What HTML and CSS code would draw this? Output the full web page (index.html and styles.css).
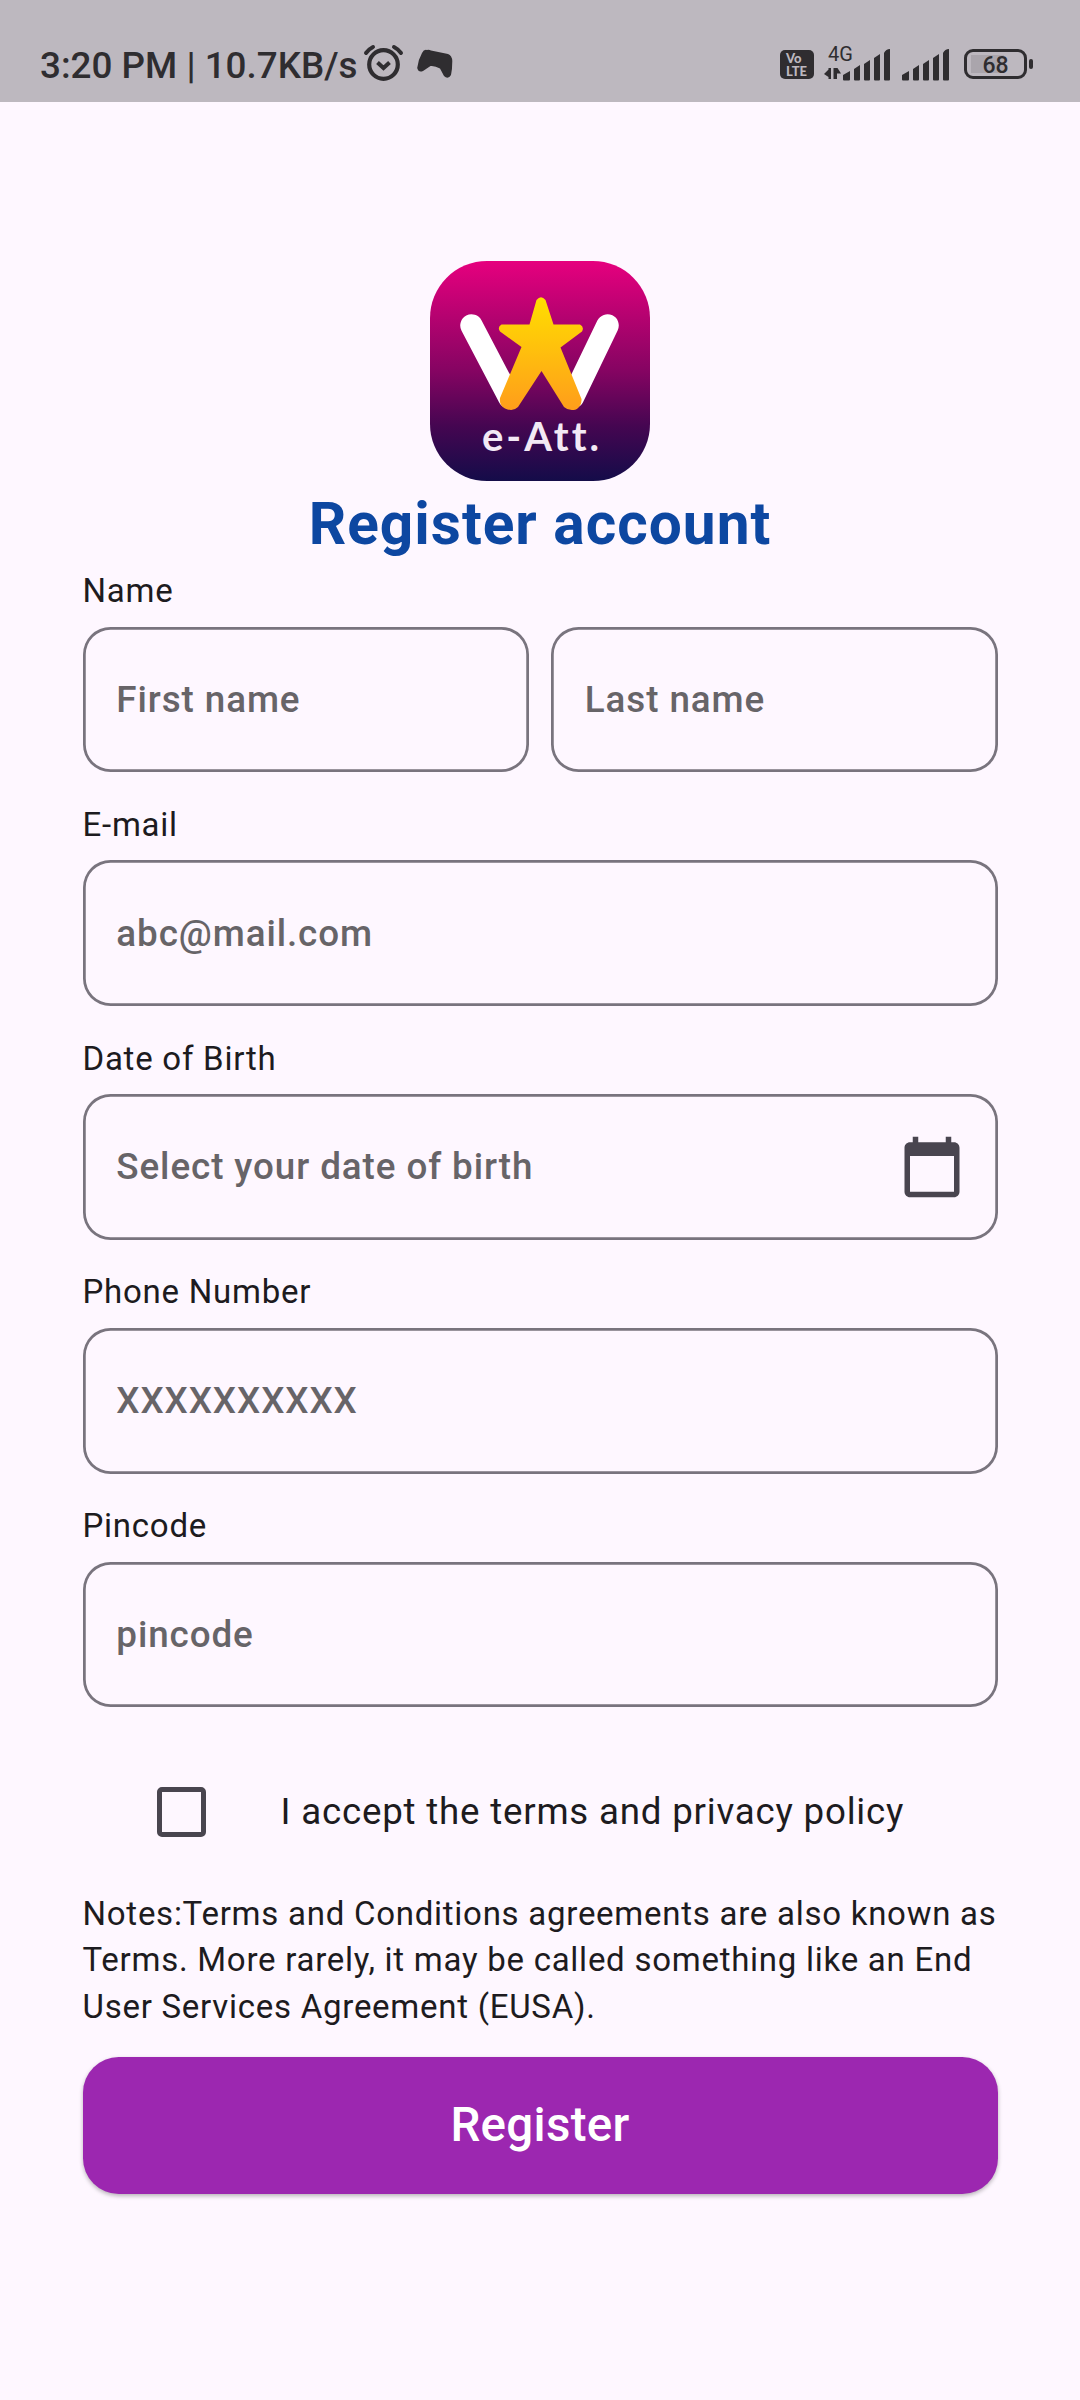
FILE: index.html
```html
<!DOCTYPE html>
<html lang="en">
<head>
<meta charset="utf-8">
<title>Register account</title>
<link rel="stylesheet" href="styles.css">
</head>
<body>
<header class="status">
  <span class="clock">3:20 PM | 10.7KB/s</span>
  <svg class="alarm" width="42" height="40" viewBox="0 0 42 40" fill="none" stroke="#2f2d30" stroke-linecap="round">
    <circle cx="20.5" cy="21.500" r="14.300" stroke-width="4.200"/>
    <path d="M14.500 19.500l6 5.500 6-5.500" stroke-width="4" stroke-linecap="butt"/>
    <path d="M3 10q3-4 7-6M38 10q-3-4-7-6" stroke-width="4"/>
  </svg>
  <svg class="gamepad" width="36" height="30" viewBox="0 0 36 30" fill="#2f2d30">
    <path d="M10 1Q12 .5 14 1.500L31 5Q35 6.500 35.300 12Q35.300 20 34 26Q31 31 27 27L23 19.500Q18 16.500 13.500 17L6 22Q1.500 24 .2 19Q1 11 5 4Q7 0 10 1Z"/>
  </svg>
  <span class="volte"><span>Vo</span><span>LTE</span></span>
  <span class="network">
    <span class="gen">4G</span>
    <svg width="68" height="32" viewBox="0 0 68 32" fill="#2f2d30">
      <path d="M0 25L4.500 20.500V19H7V30H4.500V28zM9.500 19h4l3.500 5.500h-4v5.500h-3.500z"/>
      <path d="M19 26l7-4v8.500q0 1-1 1h-5q-1 0-1-1zM30 20l6-4v14.500q0 1-1 1h-4q-1 0-1-1zM40 15l6-4v19.500q0 1-1 1h-4q-1 0-1-1zM50 9l6-4v25.500q0 1-1 1h-4q-1 0-1-1zM60 4q2-4 6-4v30.500q0 1-1 1h-4q-1 0-1-1z"/>
    </svg>
  </span>
  <svg class="bars" width="48" height="32" viewBox="0 0 48 32" fill="#2f2d30">
    <path d="M0 26l7-4v8.500q0 1-1 1h-5q-1 0-1-1zM11 20l6-4v14.500q0 1-1 1h-4q-1 0-1-1zM21 15l6-4v19.500q0 1-1 1h-4q-1 0-1-1zM31 9l6-4v25.500q0 1-1 1h-4q-1 0-1-1zM41 4q2-4 6-4v30.500q0 1-1 1h-4q-1 0-1-1z"/>
  </svg>
  <span class="battery"><span>68</span></span>
  <span class="cap"></span>
</header>

<main class="page">
  <svg class="logo" width="220" height="220" viewBox="0 0 220 220">
    <defs>
      <linearGradient id="bg" x1="0" y1="0" x2="0" y2="1">
        <stop offset="0" stop-color="#e6007e"/><stop offset=".5" stop-color="#850462"/><stop offset=".75" stop-color="#450651"/><stop offset="1" stop-color="#140c49"/>
      </linearGradient>
      <linearGradient id="gold" x1="0" y1="0" x2="0" y2="1">
        <stop offset="0" stop-color="#ffde00"/><stop offset="1" stop-color="#ff9d1b"/>
      </linearGradient>
    </defs>
    <rect width="220" height="220" rx="57" fill="url(#bg)"/>
    <path d="M41.500 64.500L79 136M177.500 64.500L143 136" stroke="#fff" stroke-width="22.500" stroke-linecap="round"/>
    <path d="M106.500 39Q111 33.500 115.500 39L123.500 63.500H150Q154.500 66 152 70.500L130.500 86.500L151.500 138Q152 145 146 148.500Q139 150.500 134 146L111.500 110L88 146Q83 151 75 147.500Q69 144 70 137L91.500 86L70 70.500Q67 66 71.500 63.500H99.500Z" fill="url(#gold)"/>
    <text class="logo-text" x="52" y="190" textLength="117" lengthAdjust="spacing">e-Att.</text>
  </svg>
  <h1 class="title">Register account</h1>

  <section class="group">
    <div class="label">Name</div>
    <div class="row">
      <div class="field">First name</div>
      <div class="field">Last name</div>
    </div>
  </section>
  <section class="group">
    <div class="label">E-mail</div>
    <div class="field">abc@mail.com</div>
  </section>
  <section class="group">
    <div class="label">Date of Birth</div>
    <div class="field">Select your date of birth
      <svg class="calendar" width="66" height="66" viewBox="0 0 24 24" fill="#49454f"><path d="M20 3h-1V1h-2v2H7V1H5v2H4c-1.100 0-2 .9-2 2v16c0 1.100.9 2 2 2h16c1.100 0 2-.9 2-2V5c0-1.100-.9-2-2-2zm0 18H4V8h16v13z"/></svg>
    </div>
  </section>
  <section class="group">
    <div class="label">Phone Number</div>
    <div class="field">XXXXXXXXXX</div>
  </section>
  <section class="group">
    <div class="label">Pincode</div>
    <div class="field">pincode</div>
  </section>

  <div class="terms"><span class="checkbox"></span><span>I accept the terms and privacy policy</span></div>
  <p class="notes">Notes:Terms and Conditions agreements are also known as Terms. More rarely, it may be called something like an End User Services Agreement (EUSA).</p>
  <button class="submit" type="button">Register</button>
</main>
</body>
</html>
```
FILE: styles.css
```css
* { box-sizing: border-box; }
body {
  margin: 0;
  height: 2400px;
  background: #fef7ff;
  color: #1d1b20;
  font-family: Roboto, sans-serif;
}
.status {
  height: 102px;
  display: flex;
  align-items: flex-start;
  background: #bdb8bf;
  color: #2f2d30;
}
.clock {
  width: 322px;
  margin: 43px 0 0 40px;
  font-size: 36.8px;
  font-weight: 500;
  line-height: 46px;
  white-space: nowrap;
}
.alarm { margin: 43px 0 0 1px; }
.gamepad { margin: 49px 0 0 12px; }
.volte {
  width: 34px;
  height: 29px;
  margin: 50px 0 0 327px;
  padding: 2px 0 0 6px;
  border-radius: 5px;
  background: #2f2d30;
  color: #bdb8bf;
  font: 900 13px/12.5px Lato, sans-serif;
  display: flex;
  flex-direction: column;
}
.network {
  width: 68px;
  height: 60px;
  margin: 49px 0 0 10px;
  display: grid;
}
.network > * { grid-area: 1 / 1; }
.gen { font-size: 20px; line-height: 20px; margin: -5px 0 0 4px; }
.bars { margin: 49px 0 0 10px; }
.battery {
  width: 63px;
  height: 30px;
  margin: 49px 0 0 14px;
  border: 3px solid #2f2d30;
  border-radius: 9px;
  background: linear-gradient(#aaa5ac, #aaa5ac) 4px 3px / 33px 18px no-repeat;
  font-size: 23px;
  font-weight: 500;
  line-height: 27px;
  text-align: center;
}
.cap { width: 4px; height: 10px; margin: 59px 0 0 2px; border-radius: 2px; background: #2f2d30; }

.page {
  display: flex;
  flex-direction: column;
  padding: 159px 82.5px 0;
}
.logo { align-self: center; }
.logo-text {
  fill: #f3e9f5;
  font: 700 40px Lato, sans-serif;
  font-variant-ligatures: none;
}
.title {
  margin: 0;
  height: 86px;
  color: #0d47a1;
  font-size: 58.6px;
  font-weight: 700;
  line-height: 86px;
  letter-spacing: 1px;
  text-align: center;
}
.group { height: 233.75px; }
.label {
  height: 59.6px;
  font-size: 33px;
  line-height: 47px;
  letter-spacing: .75px;
}
.row { display: flex; gap: 22px; }
.row .field { flex: 1; }
.field {
  display: flex;
  align-items: center;
  justify-content: space-between;
  height: 145.75px;
  padding: 0 33px 0 33.8px;
  border-radius: 27.5px;
  box-shadow: inset 0 0 0 2.75px #79747e;
  color: #676468;
  font-size: 36.8px;
  font-weight: 500;
  letter-spacing: .91px;
}
.terms {
  display: flex;
  align-items: center;
  gap: 75px;
  height: 132px;
  margin-top: 10px;
  padding-left: 74px;
  font-size: 36.7px;
  letter-spacing: .79px;
}
.checkbox { width: 49px; height: 50px; border: 5px solid #49454f; border-radius: 5px; }
.notes {
  margin: 12.75px -10px 0 0;
  height: 166px;
  font-size: 33px;
  line-height: 46.5px;
  letter-spacing: .74px;
}
.submit {
  height: 137.5px;
  padding: 0;
  border: 0;
  border-radius: 35.75px;
  background: #9c27b0;
  box-shadow: 0 2px 4px rgba(0, 0, 0, .28);
  color: #fff;
  font: 500 47.5px Roboto, sans-serif;
  letter-spacing: .29px;
}
```
